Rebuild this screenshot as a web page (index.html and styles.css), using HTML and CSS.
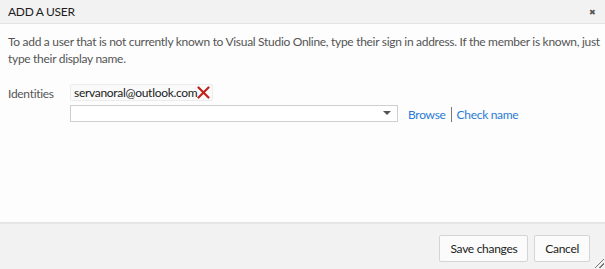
FILE: index.html
```html
<!DOCTYPE html>
<html lang="en">
<head>
    <meta charset="UTF-8">
    <title>Add a user</title>
    <link rel="stylesheet" href="styles.css">
</head>
<body>
    <div class="dialog">
        <div class="dialog-header">
            <span class="dialog-title">ADD A USER</span>
            <span class="close-button">&#x2716;</span>
        </div>
        <div class="dialog-body">
            <p class="intro">To add a user that is not currently known to Visual Studio Online, type their sign in address. If the member is known, just type their display name.</p>
            <div class="form-row">
                <label class="field-label">Identities</label>
                <div class="identity-field">
                    <div class="chips">
                        <span class="chip">servanoral@outlook.com<svg class="chip-remove" width="13" height="13" viewBox="0 0 13 13"><path d="M1.5 1.5 L11.5 11.5 M11.5 1.5 L1.5 11.5" stroke="#c0231b" stroke-width="2.2" stroke-linecap="round"/></svg></span>
                    </div>
                    <div class="picker-row">
                        <div class="picker-input">
                            <span class="picker-arrow"></span>
                        </div>
                        <a href="#" class="picker-link">Browse</a>
                        <span class="link-divider"></span>
                        <a href="#" class="picker-link">Check name</a>
                    </div>
                </div>
            </div>
        </div>
        <div class="dialog-footer">
            <button class="footer-button">Save changes</button>
            <button class="footer-button">Cancel</button>
            <span class="resize-grip"></span>
        </div>
    </div>
</body>
</html>
```

FILE: styles.css
```css
/* Dialog shell */
* {
    box-sizing: border-box;
}

body {
    font-family: 'Lato', 'Liberation Sans', sans-serif;
    font-size: 12px;
    letter-spacing: -0.3px;
    margin: 0;
    padding: 0;
    color: #222;
    background: #fff;
}

.dialog {
    width: 605px;
    height: 269px;
    display: flex;
    flex-direction: column;
    background-color: #fdfdfd;
}

.dialog-header {
    height: 24px;
    flex-shrink: 0;
    background-color: #f2f2f2;
    border-bottom: 1px solid #e3e3e3;
    display: flex;
    align-items: center;
    justify-content: space-between;
    padding: 0 9px 0 8px;
}
.dialog-title {
    font-size: 12px;
    color: #1e1e1e;
}
.close-button {
    font-size: 8px;
    color: #555;
}

.dialog-body {
    flex: 1;
    padding: 9px 4px 0 8px;
}
.intro {
    margin: 0;
    line-height: 17px;
    color: #555;
}

.form-row {
    display: flex;
    margin-top: 17px;
}
.field-label {
    width: 62px;
    color: #555;
    padding-top: 2px;
}

.identity-field {
    display: flex;
    flex-direction: column;
    gap: 3px;
}
.chips {
    display: flex;
}
.chip {
    display: inline-flex;
    align-items: center;
    height: 17px;
    padding: 0 2px 0 3px;
    border: 1px solid #ececec;
    border-radius: 2px;
    background-color: #fafafa;
    color: #222;
}

.picker-row {
    display: flex;
    align-items: center;
}
.picker-input {
    width: 328px;
    height: 17px;
    border: 1px solid #cfcfcf;
    background: #fff;
    position: relative;
}
.picker-arrow {
    position: absolute;
    right: 6px;
    top: 5px;
    border-left: 4px solid transparent;
    border-right: 4px solid transparent;
    border-top: 4px solid #555;
}
.picker-link {
    color: #2b7bd4;
    text-decoration: none;
    margin-top: 3px;
}
.picker-row .picker-link:first-of-type {
    margin-left: 10px;
}
.link-divider {
    width: 1px;
    height: 15px;
    background-color: #7a7a7a;
    margin: 3px 5px 0 5px;
}

.dialog-footer {
    height: 47px;
    flex-shrink: 0;
    background-color: #f2f2f2;
    border-top: 2px solid #e6e6e6;
    display: flex;
    justify-content: flex-end;
    align-items: flex-start;
    gap: 6px;
    padding: 11px 15px 0 0;
    position: relative;
}
.footer-button {
    font-family: inherit;
    font-size: 12px;
    letter-spacing: -0.3px;
    height: 27px;
    padding: 0 10px;
    background-color: #fbfbfb;
    border: 1px solid #d4d4d4;
    border-radius: 2px;
    color: #222;
}
.resize-grip {
    position: absolute;
    right: 1px;
    bottom: 1px;
    width: 9px;
    height: 9px;
    background: linear-gradient(135deg, transparent 45%, #777 45%, #777 55%, transparent 55%, transparent 70%, #777 70%, #777 78%, transparent 78%);
}
```
